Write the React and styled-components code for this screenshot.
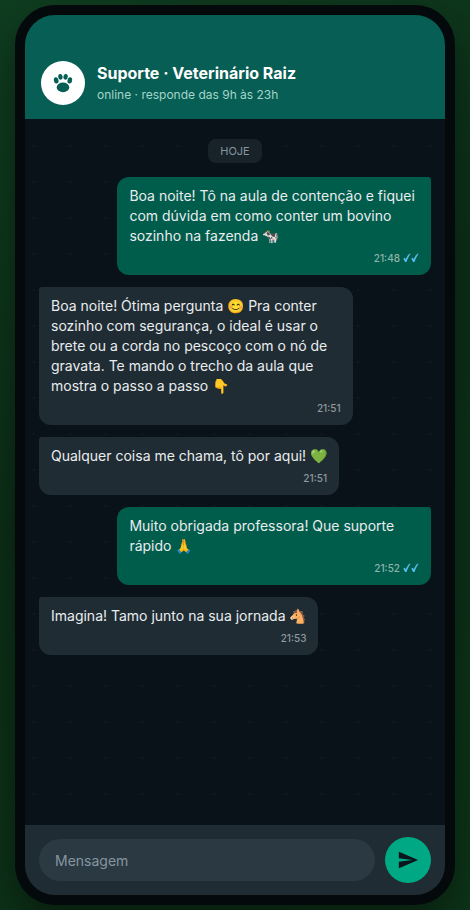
import React, { useState } from 'react';
import styled, { createGlobalStyle } from 'styled-components';

const GlobalStyle = createGlobalStyle`
  *, *::before, *::after {
    box-sizing: border-box;
  }
  body {
    margin: 0;
    background: #0d351b;
    font-family: Inter, "Liberation Sans", sans-serif;
  }
`;

const Page = styled.main`
  display: flex;
  justify-content: center;
  min-height: 100vh;
  padding: 5px 15px;
  background: linear-gradient(150deg, #0f3d20 0%, #0c2f17 45%, #0d3419 100%);
`;

const Phone = styled.div`
  display: flex;
  flex-direction: column;
  width: 100%;
  max-width: 480px;
  border: 10px solid #04090c;
  border-radius: 40px;
  overflow: hidden;
  background: #0b141a;
  box-shadow: 0 20px 40px #0006;
`;

const Header = styled.header`
  display: flex;
  align-items: center;
  gap: 12px;
  padding: 46px 16px 14px;
  background: #075e54;
`;

const Avatar = styled.div`
  display: grid;
  place-items: center;
  flex: none;
  width: 44px;
  height: 44px;
  border-radius: 50%;
  background: #fff;
  color: #075e54;
`;

const Title = styled.h1`
  margin: 0 0 2px;
  font-size: 16px;
  font-weight: 700;
  line-height: 22px;
  color: #fff;
`;

const Status = styled.p`
  margin: 0;
  font-size: 12px;
  line-height: 18px;
  color: #a3d5c9;
`;

const Chat = styled.section`
  flex: 1;
  display: flex;
  flex-direction: column;
  gap: 12px;
  padding: 20px 14px;
  background: radial-gradient(circle at 25% 75%, #111a21 1px, transparent 1px) 0 0 / 36px 36px, #0a1219;
`;

const Day = styled.div`
  align-self: center;
  margin-bottom: 2px;
  padding: 0 12px;
  border-radius: 8px;
  background: #182229;
  color: #8696a0;
  font-size: 11px;
  line-height: 24px;
`;

const Bubble = styled.article`
  align-self: ${({ $sent }) => ($sent ? 'flex-end' : 'flex-start')};
  max-width: 80%;
  padding: 9px 12px;
  border-radius: ${({ $sent }) => ($sent ? '12px 3px 12px 12px' : '3px 12px 12px 12px')};
  background: ${({ $sent }) => ($sent ? '#005c4b' : '#202c33')};
  color: #e9edef;
`;

const Text = styled.p`
  margin: 0;
  font-size: 14px;
  line-height: 20px;
`;

const Meta = styled.div`
  display: flex;
  justify-content: flex-end;
  align-items: center;
  gap: 3px;
  margin-top: 4px;
  font-size: 10px;
  font-weight: 500;
  line-height: 16px;
  color: ${({ $sent }) => ($sent ? '#8fb5ad' : '#8f999e')};
`;

const Composer = styled.form`
  display: flex;
  align-items: center;
  gap: 10px;
  padding: 12px 14px;
  background: #202c33;
`;

const Field = styled.input`
  flex: 1;
  min-width: 0;
  height: 42px;
  padding: 0 16px;
  border: 0;
  border-radius: 21px;
  outline: none;
  background: #2a3942;
  color: #e9edef;
  font: 14px Inter, "Liberation Sans", sans-serif;
  &::placeholder {
    color: #8696a0;
    opacity: 1;
  }
`;

const Send = styled.button`
  display: grid;
  place-items: center;
  flex: none;
  width: 46px;
  height: 46px;
  padding: 0;
  border: 0;
  border-radius: 50%;
  background: #00a884;
  color: #0b141a;
  cursor: pointer;
`;

const messages = [
  { sent: true, time: '21:48', text: 'Boa noite! Tô na aula de contenção e fiquei com dúvida em como conter um bovino sozinho na fazenda 🐄' },
  { sent: false, time: '21:51', text: 'Boa noite! Ótima pergunta 😊 Pra conter sozinho com segurança, o ideal é usar o brete ou a corda no pescoço com o nó de gravata. Te mando o trecho da aula que mostra o passo a passo 👇' },
  { sent: false, time: '21:51', text: 'Qualquer coisa me chama, tô por aqui! 💚' },
  { sent: true, time: '21:52', text: 'Muito obrigada professora! Que suporte rápido 🙏' },
  { sent: false, time: '21:53', text: 'Imagina! Tamo junto na sua jornada 🐴' },
];

function PawIcon() {
  return (
    <svg width="20" height="20" viewBox="0 0 20 20" fill="currentColor" aria-hidden="true">
      <ellipse cx="3.2" cy="7.4" rx="2.3" ry="3.1" transform="rotate(-12 3.2 7.4)" />
      <ellipse cx="7.4" cy="3.8" rx="2.2" ry="2.9" transform="rotate(-6 7.4 3.8)" />
      <ellipse cx="12.6" cy="3.8" rx="2.2" ry="2.9" transform="rotate(6 12.6 3.8)" />
      <ellipse cx="16.8" cy="7.4" rx="2.3" ry="3.1" transform="rotate(12 16.8 7.4)" />
      <ellipse cx="10" cy="14.4" rx="6.3" ry="4.8" />
    </svg>
  );
}

function TicksIcon() {
  return (
    <svg width="16" height="10" viewBox="0 0 16 10" fill="#53bdeb" role="img" aria-label="lida">
      <path d="M0.3 5.5 1.9 4.8 2.8 6.2C3.7 4 4.9 2 6.400 0.700H7.700C5.900 3 4.600 5.700 3.500 9H2.100z" />
      <path d="M8.300 5.500 9.900 4.800 10.800 6.200C11.700 4 12.900 2 14.400 0.700H15.700C13.900 3 12.600 5.700 11.500 9H10.100z" />
    </svg>
  );
}

function SendIcon() {
  return (
    <svg width="22" height="22" viewBox="0 0 24 24" fill="currentColor" aria-hidden="true">
      <path d="M2.01 21 23 12 2.01 3 2 10l15 2-15 2z" />
    </svg>
  );
}

function Message({ sent, time, text }) {
  return (
    <Bubble $sent={sent}>
      <Text>{text}</Text>
      <Meta $sent={sent}>
        <time>{time}</time>
        {sent && <TicksIcon />}
      </Meta>
    </Bubble>
  );
}

export default function App() {
  const [draft, setDraft] = useState('');

  return (
    <>
      <GlobalStyle />
      <Page>
        <Phone>
          <Header>
            <Avatar>
              <PawIcon />
            </Avatar>
            <div>
              <Title>Suporte · Veterinário Raiz</Title>
              <Status>online · responde das 9h às 23h</Status>
            </div>
          </Header>
          <Chat>
            <Day>HOJE</Day>
            {messages.map((message) => (
              <Message key={message.text} {...message} />
            ))}
          </Chat>
          <Composer onSubmit={(e) => e.preventDefault()}>
            <Field
              type="text"
              placeholder="Mensagem"
              aria-label="Mensagem"
              value={draft}
              onChange={(e) => setDraft(e.target.value)}
            />
            <Send type="submit" aria-label="Enviar">
              <SendIcon />
            </Send>
          </Composer>
        </Phone>
      </Page>
    </>
  );
}
